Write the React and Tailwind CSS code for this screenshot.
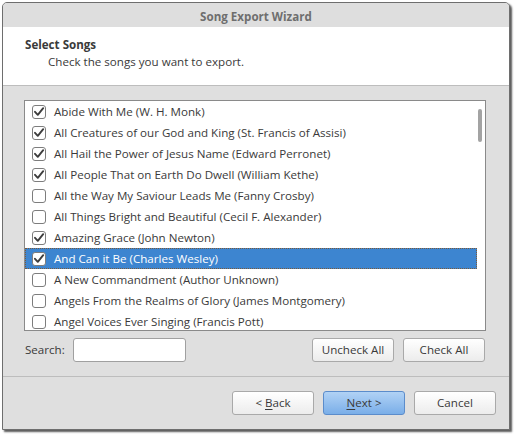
import React from "react";

const songs = [
  ["Abide With Me (W. H. Monk)", true],
  ["All Creatures of our God and King (St. Francis of Assisi)", true],
  ["All Hail the Power of Jesus Name (Edward Perronet)", true],
  ["All People That on Earth Do Dwell (William Kethe)", true],
  ["All the Way My Saviour Leads Me (Fanny Crosby)", false],
  ["All Things Bright and Beautiful (Cecil F. Alexander)", false],
  ["Amazing Grace (John Newton)", true],
  ["And Can it Be (Charles Wesley)", true],
  ["A New Commandment (Author Unknown)", false],
  ["Angels From the Realms of Glory (James Montgomery)", false],
  ["Angel Voices Ever Singing (Francis Pott)", false],
];

function Check({ checked }) {
  return (
    <svg width="14" height="14" viewBox="0 0 14 14" className="shrink-0">
      <rect x="0.5" y="0.5" width="13" height="13" rx="2.5" fill="#ffffff" stroke="#7d7d7d" />
      {checked && (
        <path d="M3 6.8 L5.8 9.8 L11.2 3.2" fill="none" stroke="#3d3d3d" strokeWidth="1.9" strokeLinecap="round" strokeLinejoin="round" />
      )}
    </svg>
  );
}

function Btn({ children, primary }) {
  return (
    <div
      className={
        "w-[82px] h-[24px] rounded-[3px] border flex items-center justify-center text-[11.6px] " +
        (primary
          ? "border-[#5b8ccb] bg-gradient-to-b from-[#b1d2f5] to-[#7aaee8] text-[#3a3a3a]"
          : "border-[#a9a9a9] bg-gradient-to-b from-[#ffffff] to-[#ececec] text-[#3a3a3a]")
      }
    >
      {children}
    </div>
  );
}

export default function App() {
  return (
    <div className="w-[517px] h-[437px] bg-white pl-[2px] pt-[2px]" style={{ fontFamily: '"Open Sans", "DejaVu Sans", sans-serif' }}>
      <div className="w-[508px] h-[428px] border border-[#6e6e6e] rounded-t-[5px] bg-[#dfdfdf] flex flex-col overflow-hidden shadow-[2px_2px_2px_rgba(0,0,0,0.65)]">
        <div className="h-[24px] shrink-0 bg-[#dedede] flex items-center justify-center pt-[3px] text-[11.6px] font-bold text-[#6e6e6e]">
          Song Export Wizard
        </div>
        <div className="h-[59px] shrink-0 bg-white border-b border-[#bdbdbd] pl-[22px] pt-[9px] text-[11.6px] text-[#3a3a3a] leading-[17px]">
          <div className="font-bold">Select Songs</div>
          <div className="pl-[23px]">Check the songs you want to export.</div>
        </div>
        <div className="h-[291px] shrink-0 border-b border-[#bdbdbd] pl-[21px] pr-[22px] pt-[14px] flex flex-col">
          <div className="w-[462px] h-[231px] bg-white border border-[#8a8a8a] flex overflow-hidden">
            <div className="flex-1 flex flex-col">
              {songs.map(([name, checked], i) => {
                const sel = i === 7;
                return (
                  <div
                    key={name}
                    className={
                      "h-[21px] shrink-0 flex items-center gap-[8px] pl-[7px] text-[11.6px] whitespace-nowrap " +
                      (sel
                        ? "bg-[#3d85d0] text-white outline outline-1 outline-dotted outline-[#7a5a3a] -outline-offset-1"
                        : "text-[#3a3a3a]")
                    }
                  >
                    <Check checked={checked} />
                    <span>{name}</span>
                  </div>
                );
              })}
            </div>
            <div className="w-[8px] shrink-0 pt-[8px] pl-[1px]">
              <div className="w-[4px] h-[33px] rounded-[2px] bg-[#a3a3a3]" />
            </div>
          </div>
          <div className="mt-[7px] flex items-center h-[24px]">
            <span className="text-[11.6px] text-[#3a3a3a] pl-[1px] w-[49px]">Search:</span>
            <div className="w-[113px] h-[24px] bg-white border border-[#a0a0a0] rounded-[3px]" />
            <div className="flex-1" />
            <div className="flex gap-[9px] pr-[2px]">
              <Btn>Uncheck All</Btn>
              <Btn>Check All</Btn>
            </div>
          </div>
        </div>
        <div className="flex-1 flex justify-end gap-[9px] pr-[13px] pt-[14px]">
          <Btn>
            &lt; <span className="underline underline-offset-2 ml-[3px]">B</span>ack
          </Btn>
          <Btn primary>
            <span className="underline underline-offset-2">N</span>ext &gt;
          </Btn>
          <Btn>Cancel</Btn>
        </div>
      </div>
    </div>
  );
}
